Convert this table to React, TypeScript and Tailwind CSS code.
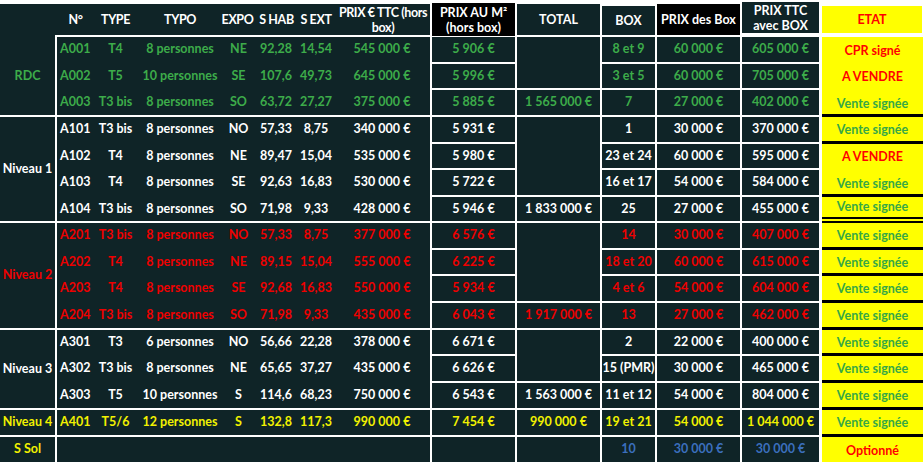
import React from "react";

const DARK = "bg-[#0f2427]";
const GREEN = "text-[#3dac4a]";
const WHITE = "text-white";
const RED = "text-[#ee0000]";
const YEL = "text-[#f2f200]";
const BLUE = "text-[#3b6fbd]";
const YGREEN = "text-[#36a846]";
const YRED = "text-[#ff0000]";

const RS = [
  "",
  "row-start-1",
  "row-start-2",
  "row-start-3",
  "row-start-4",
  "row-start-5",
  "row-start-6",
  "row-start-7",
  "row-start-8",
  "row-start-9",
  "row-start-10",
  "row-start-11",
  "row-start-12",
  "row-start-13",
  "row-start-14",
  "row-start-15",
  "row-start-16",
  "row-start-17",
];
const SP = [
  "",
  "row-span-1",
  "row-span-2",
  "row-span-3",
  "row-span-4",
  "row-span-5",
  "row-span-6",
  "row-span-7",
  "row-span-8",
  "row-span-9",
  "row-span-10",
  "row-span-11",
  "row-span-12",
  "row-span-13",
  "row-span-14",
  "row-span-15",
  "row-span-16",
];
const HEIGHTS = [25, 24, 25, 25, 24, 25, 24, 25, 24, 25, 25, 24, 25, 25, 25, 25];
const HC: Record<number, string> = { 24: "h-[24px]", 25: "h-[25px]" };

const SUB = "grid grid-cols-[37px_43px_86px_31px_44px_36px_96px] items-center";

type Row = [string, string, string, string, string, string, string, string, string, string, string];

type Group = { label: string; color: string; start: number; total: string; rows: Row[] };

const groups: Group[] = [
  {
    label: "RDC",
    color: GREEN,
    start: 0,
    total: "1 565 000 €",
    rows: [
      ["A001", "T4", "8 personnes", "NE", "92,28", "14,54", "545 000 €", "5 906 €", "8 et 9", "60 000 €", "605 000 €"],
      ["A002", "T5", "10 personnes", "SE", "107,6", "49,73", "645 000 €", "5 996 €", "3 et 5", "60 000 €", "705 000 €"],
      ["A003", "T3 bis", "8 personnes", "SO", "63,72", "27,27", "375 000 €", "5 885 €", "7", "27 000 €", "402 000 €"],
    ],
  },
  {
    label: "Niveau 1",
    color: WHITE,
    start: 3,
    total: "1 833 000 €",
    rows: [
      ["A101", "T3 bis", "8 personnes", "NO", "57,33", "8,75", "340 000 €", "5 931 €", "1", "30 000 €", "370 000 €"],
      ["A102", "T4", "8 personnes", "NE", "89,47", "15,04", "535 000 €", "5 980 €", "23 et 24", "60 000 €", "595 000 €"],
      ["A103", "T4", "8 personnes", "SE", "92,63", "16,83", "530 000 €", "5 722 €", "16 et 17", "54 000 €", "584 000 €"],
      ["A104", "T3 bis", "8 personnes", "SO", "71,98", "9,33", "428 000 €", "5 946 €", "25", "27 000 €", "455 000 €"],
    ],
  },
  {
    label: "Niveau 2",
    color: RED,
    start: 7,
    total: "1 917 000 €",
    rows: [
      ["A201", "T3 bis", "8 personnes", "NO", "57,33", "8,75", "377 000 €", "6 576 €", "14", "30 000 €", "407 000 €"],
      ["A202", "T4", "8 personnes", "NE", "89,15", "15,04", "555 000 €", "6 225 €", "18 et 20", "60 000 €", "615 000 €"],
      ["A203", "T4", "8 personnes", "SE", "92,68", "16,83", "550 000 €", "5 934 €", "4 et 6", "54 000 €", "604 000 €"],
      ["A204", "T3 bis", "8 personnes", "SO", "71,98", "9,33", "435 000 €", "6 043 €", "13", "27 000 €", "462 000 €"],
    ],
  },
  {
    label: "Niveau 3",
    color: WHITE,
    start: 11,
    total: "1 563 000 €",
    rows: [
      ["A301", "T3", "6 personnes", "NO", "56,66", "22,28", "378 000 €", "6 671 €", "2", "22 000 €", "400 000 €"],
      ["A302", "T3 bis", "8 personnes", "NE", "65,65", "37,27", "435 000 €", "6 626 €", "15 (PMR)", "30 000 €", "465 000 €"],
      ["A303", "T5", "10 personnes", "S", "114,6", "68,23", "750 000 €", "6 543 €", "11 et 12", "54 000 €", "804 000 €"],
    ],
  },
  {
    label: "Niveau 4",
    color: YEL,
    start: 14,
    total: "990 000 €",
    rows: [
      ["A401", "T5/6", "12 personnes", "S", "132,8", "117,3", "990 000 €", "7 454 €", "19 et 21", "54 000 €", "1 044 000 €"],
    ],
  },
];

type Etat = { start: number; items: [string, string][]; dbl?: boolean; last?: boolean };
const VS: [string, string] = ["Vente signée", YGREEN];
const etats: Etat[] = [
  { start: 0, items: [["CPR signé", YRED], ["A VENDRE", YRED], VS] },
  { start: 3, items: [VS] },
  { start: 4, items: [["A VENDRE", YRED], VS] },
  { start: 6, items: [VS], dbl: true },
  { start: 7, items: [VS] },
  { start: 8, items: [VS] },
  { start: 9, items: [VS] },
  { start: 10, items: [VS] },
  { start: 11, items: [VS] },
  { start: 12, items: [VS] },
  { start: 13, items: [VS] },
  { start: 14, items: [VS] },
  { start: 15, items: [["Optionné", YRED]], last: true },
];

const cellBase = `${DARK} flex items-center justify-center whitespace-nowrap`;

export default function App() {
  const els: React.ReactNode[] = [];

  // label column
  groups.forEach((g, gi) => {
    const cls =
      gi === 0
        ? `col-start-1 row-start-1 row-span-4 pt-[33px]`
        : `col-start-1 ${RS[g.start + 2]} ${SP[g.rows.length]}`;
    els.push(
      <div key={`lab${gi}`} className={`${cls} ${cellBase} ${g.color}`}>
        {g.label}
      </div>
    );
  });
  els.push(
    <div key="labS" className={`col-start-1 row-start-17 ${cellBase} ${YEL}`}>
      S Sol
    </div>
  );

  // header
  els.push(
    <div key="h2" className={`col-start-2 row-start-1 -ml-[2px] pl-[2px] ${DARK} ${SUB} text-white text-center tracking-[-0.4px]`}>
      <div className="pt-[2px]">N°</div>
      <div className="pt-[2px]">TYPE</div>
      <div className="pt-[2px]">TYPO</div>
      <div className="pt-[2px] whitespace-nowrap -ml-[2px]">EXPO</div>
      <div className="pt-[2px] whitespace-nowrap pl-[1px]">S HAB</div>
      <div className="pt-[2px] whitespace-nowrap">S EXT</div>
      <div className="leading-[15px] whitespace-nowrap pl-[2px]">
        PRIX € TTC (hors
        <br />
        box)
      </div>
    </div>
  );
  els.push(
    <div key="h3" className={`col-start-3 row-start-1 -mt-[1px] -mb-[1px] bg-black text-white flex items-center justify-center text-center leading-[15px] whitespace-nowrap`}>
      <div>
        PRIX AU M²
        <br />
        (hors box)
      </div>
    </div>
  );
  els.push(
    <div key="h4" className={`col-start-4 row-start-1 ${cellBase} text-white pt-[2px]`}>
      TOTAL
    </div>
  );
  els.push(
    <div key="h5" className={`col-start-5 row-start-1 mt-[2px] ${cellBase} text-white pt-[2px]`}>
      BOX
    </div>
  );
  els.push(
    <div key="h6" className={`col-start-6 row-start-1 bg-black text-white flex items-center justify-center whitespace-nowrap pt-[2px]`}>
      PRIX des Box
    </div>
  );
  els.push(
    <div key="h7" className={`col-start-7 row-start-1 -mt-[2px] mb-[2px] ${DARK} text-white flex items-center justify-center text-center leading-[15px] whitespace-nowrap`}>
      <div>
        PRIX TTC
        <br />
        avec BOX
      </div>
    </div>
  );
  els.push(
    <div key="h8" className={`col-start-8 row-start-1 ml-[1px] mr-[1px] mt-[2px] mb-[2px] bg-[#ffff00] ${YRED} flex items-center justify-center pt-[2px]`}>
      ETAT
    </div>
  );

  // data blocks
  groups.forEach((g, gi) => {
    els.push(
      <div
        key={`blk${gi}`}
        className={`col-start-2 ${RS[g.start + 2]} ${SP[g.rows.length]} ${DARK} flex flex-col gap-[2px] ${g.color}`}
      >
        {g.rows.map((r, ri) => (
          <div key={ri} className={`${HC[HEIGHTS[g.start + ri]]} ${SUB} whitespace-nowrap`}>
            <div className="pl-[3px]">{r[0]}</div>
            <div className="text-center">{r[1]}</div>
            <div className="text-center">{r[2]}</div>
            <div className="text-center">{r[3]}</div>
            <div className="text-center">{r[4]}</div>
            <div className="text-center">{r[5]}</div>
            <div className="text-center">{r[6]}</div>
          </div>
        ))}
      </div>
    );

    g.rows.forEach((r, ri) => {
      const gr = g.start + ri + 2;
      els.push(
        <div key={`m2${gi}${ri}`} className={`col-start-3 ${RS[gr]} ${cellBase} ${g.color}`}>
          {r[7]}
        </div>
      );
      els.push(
        <div key={`bx${gi}${ri}`} className={`col-start-5 ${RS[gr]} ${cellBase} ${g.color}`}>
          {r[8]}
        </div>
      );
      els.push(
        <div key={`pb${gi}${ri}`} className={`col-start-6 ${RS[gr]} ${cellBase} ${g.color}`}>
          {r[9]}
        </div>
      );
      els.push(
        <div key={`tt${gi}${ri}`} className={`col-start-7 ${RS[gr]} ${cellBase} ${g.color}`}>
          {r[10]}
        </div>
      );
    });

    if (g.rows.length > 1) {
      els.push(
        <div key={`totm${gi}`} className={`col-start-4 ${RS[g.start + 2]} ${SP[g.rows.length - 1]} ${DARK}`} />
      );
    }
    els.push(
      <div key={`tot${gi}`} className={`col-start-4 ${RS[g.start + g.rows.length + 1]} ${cellBase} ${g.color}`}>
        {g.total}
      </div>
    );
  });

  // S Sol row
  els.push(<div key="ss2" className={`col-start-2 row-start-17 ${DARK}`} />);
  els.push(<div key="ss3" className={`col-start-3 row-start-17 ${DARK}`} />);
  els.push(<div key="ss4" className={`col-start-4 row-start-17 ${DARK}`} />);
  els.push(
    <div key="ss5" className={`col-start-5 row-start-17 ${cellBase} ${BLUE}`}>
      10
    </div>
  );
  els.push(
    <div key="ss6" className={`col-start-6 row-start-17 ${cellBase} ${BLUE}`}>
      30 000 €
    </div>
  );
  els.push(
    <div key="ss7" className={`col-start-7 row-start-17 ${cellBase} ${BLUE}`}>
      30 000 €
    </div>
  );

  // ETAT column
  els.push(<div key="etbg" className="col-start-8 row-start-2 row-span-16 ml-[1px] bg-black" />);
  etats.forEach((e, ei) => {
    const n = e.items.length;
    els.push(
      <div
        key={`et${ei}`}
        className={`col-start-8 ${RS[e.start + 2]} ${SP[n]} ml-[1px] bg-[#ffff00] ${e.last ? "" : e.dbl ? "" : "mb-[1px]"} flex flex-col gap-[2px] overflow-hidden`}
      >
        {e.items.map((it, ii) => (
          <div
            key={ii}
            className={`${n > 1 ? HC[HEIGHTS[e.start + ii]] : "flex-1"} shrink-0 flex items-center justify-center pt-[3px] whitespace-nowrap ${it[1]}`}
          >
            {it[0]}
          </div>
        ))}
        {e.dbl ? <div className="h-[2px] bg-black mb-[2px] shrink-0" /> : null}
      </div>
    );
  });

  return (
    <div className="w-[924px] h-[462px] bg-white overflow-hidden">
      <div
        className="w-[923px] pt-[4px] grid grid-cols-[55px_373px_83px_83px_53px_83px_77px_102px] grid-rows-[31px_25px_24px_25px_25px_24px_25px_24px_25px_24px_25px_25px_24px_25px_25px_25px_25px] gap-[2px] font-['Lato',sans-serif] font-bold text-[12.5px] leading-none"
      >
        {els}
      </div>
    </div>
  );
}
